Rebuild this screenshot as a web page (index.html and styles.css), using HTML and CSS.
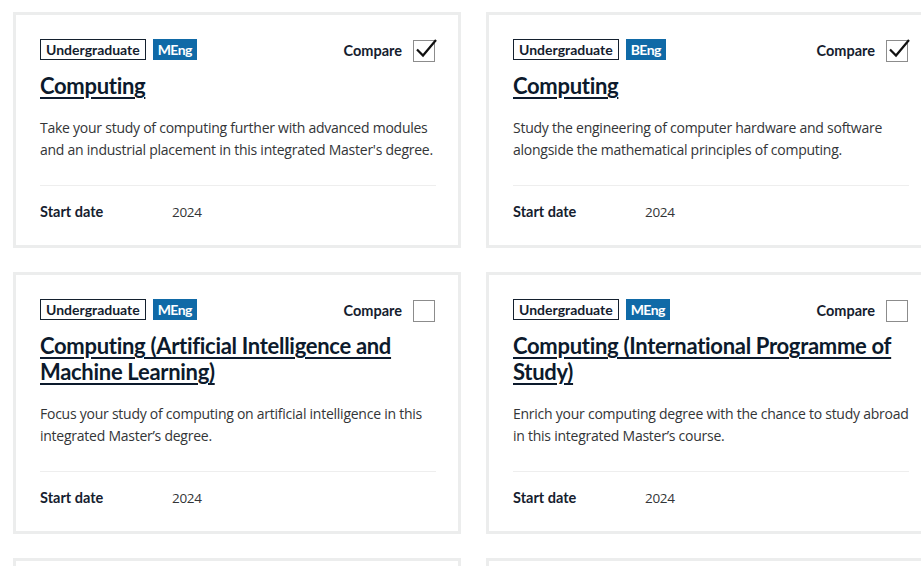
FILE: index.html
```html
<!DOCTYPE html>
<html lang="en">
<head>
<meta charset="utf-8">
<title>Courses</title>
<link rel="stylesheet" href="styles.css">
</head>
<body>
<div class="grid">
  <article class="card">
    <div class="top">
      <div class="tags"><span class="tag tag-outline">Undergraduate</span><span class="tag tag-fill">MEng</span></div>
      <label class="compare">Compare <span class="box"><svg class="tick" viewBox="0 0 24 24" width="24" height="24"><path d="M3 12.5 L9 18.5 L22 3" fill="none" stroke="#111" stroke-width="2.2"/></svg></span></label>
    </div>
    <h2 class="title"><a href="#">Computing</a></h2>
    <p class="desc">Take your study of computing further with advanced modules and an industrial placement in this integrated Master's degree.</p>
    <div class="meta"><span class="label">Start date</span><span class="value">2024</span></div>
  </article>
  <article class="card">
    <div class="top">
      <div class="tags"><span class="tag tag-outline">Undergraduate</span><span class="tag tag-fill">BEng</span></div>
      <label class="compare">Compare <span class="box"><svg class="tick" viewBox="0 0 24 24" width="24" height="24"><path d="M3 12.5 L9 18.5 L22 3" fill="none" stroke="#111" stroke-width="2.2"/></svg></span></label>
    </div>
    <h2 class="title"><a href="#">Computing</a></h2>
    <p class="desc">Study the engineering of computer hardware and software alongside the mathematical principles of computing.</p>
    <div class="meta"><span class="label">Start date</span><span class="value">2024</span></div>
  </article>
  <article class="card">
    <div class="top">
      <div class="tags"><span class="tag tag-outline">Undergraduate</span><span class="tag tag-fill">MEng</span></div>
      <label class="compare">Compare <span class="box"></span></label>
    </div>
    <h2 class="title"><a href="#">Computing (Artificial Intelligence and Machine Learning)</a></h2>
    <p class="desc">Focus your study of computing on artificial intelligence in this integrated Master’s degree.</p>
    <div class="meta"><span class="label">Start date</span><span class="value">2024</span></div>
  </article>
  <article class="card">
    <div class="top">
      <div class="tags"><span class="tag tag-outline">Undergraduate</span><span class="tag tag-fill">MEng</span></div>
      <label class="compare">Compare <span class="box"></span></label>
    </div>
    <h2 class="title"><a href="#">Computing (International Programme of Study)</a></h2>
    <p class="desc">Enrich your computing degree with the chance to study abroad in this integrated Master’s course.</p>
    <div class="meta"><span class="label">Start date</span><span class="value">2024</span></div>
  </article>
  <article class="card"></article>
  <article class="card"></article>
</div>
</body>
</html>
```

FILE: styles.css
```css
html, body {
  margin: 0;
  padding: 0;
  background: #fff;
  overflow: hidden;
}
body {
  font-family: "Open Sans", "Noto Sans", sans-serif;
  color: #2f3133;
}
.grid {
  display: grid;
  grid-template-columns: 448px 448px;
  column-gap: 25px;
  row-gap: 24px;
  padding: 12px 0 0 13px;
  width: 960px;
}
.card {
  border: 3px solid #eceded;
  padding: 24px 22px 22px 24px;
  min-height: 40px;
}
.top {
  display: flex;
  justify-content: space-between;
  align-items: flex-start;
}
.tags {
  display: flex;
  gap: 7px;
}
.tag {
  font-family: "Lato", sans-serif;
  font-weight: 700;
  font-size: 14px;
  line-height: 19px;
  height: 19px;
  padding: 0 5px;
}
.tag-outline {
  border: 1px solid #14202e;
  color: #14202e;
}
.tag-fill {
  background: #106aa7;
  color: #fff;
  border: 1px solid #106aa7;
  padding: 0 4px;
  letter-spacing: -0.6px;
}
.compare {
  display: flex;
  align-items: center;
  gap: 11px;
  font-family: "Lato", sans-serif;
  font-weight: 700;
  font-size: 14.5px;
  color: #15202e;
  margin-right: 1px;
}
.box {
  position: relative;
  width: 20px;
  height: 20px;
  border: 1px solid #8c8c8c;
  margin-top: 1px;
}
.tick {
  position: absolute;
  left: 0px;
  top: -4px;
}
.title {
  margin: 11px 0 0;
  font-family: "Lato", sans-serif;
  font-weight: 700;
  font-size: 22px;
  line-height: 26px;
  letter-spacing: -0.3px;
}
.title a {
  color: #0c1a2c;
  text-decoration: underline;
  text-decoration-thickness: 2px;
  text-underline-offset: 3px;
}
.desc {
  margin: 18px 0 0;
  font-size: 14px;
  line-height: 22px;
  letter-spacing: -0.25px;
  color: #333537;
}
.meta {
  margin-top: 24px;
  border-top: 1px solid #eeeeee;
  padding-top: 15px;
  display: flex;
  font-size: 14.5px;
  line-height: 22px;
}
.label {
  font-family: "Lato", sans-serif;
  font-weight: 700;
  color: #15202e;
  width: 132px;
}
.value {
  color: #333537;
  font-size: 13.5px;
  letter-spacing: -0.3px;
}
```
